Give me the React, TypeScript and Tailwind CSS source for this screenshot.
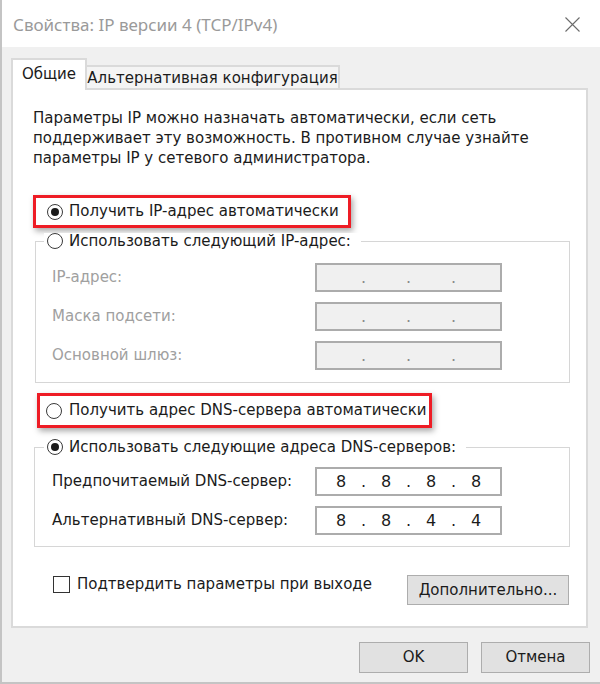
import React from "react";

const dlg = "font-['DejaVu_Sans',sans-serif]";

function Radio({ checked }: { checked?: boolean }) {
  return (
    <span className="w-[16px] h-[16px] rounded-full border-[1.5px] border-[#3a3a3a] bg-white flex items-center justify-center shrink-0">
      {checked && <span className="w-[8px] h-[8px] rounded-full bg-[#1a1a1a]" />}
    </span>
  );
}

function IpField({ octets, disabled }: { octets: string[]; disabled?: boolean }) {
  const cells: React.ReactNode[] = [];
  octets.forEach((o, i) => {
    cells.push(
      <span key={"o" + i} className="w-[30px] text-center">
        {o}
      </span>
    );
    if (i < 3)
      cells.push(
        <span key={"d" + i} className={"w-[15px] text-center " + (disabled ? "text-[#8a8a8a]" : "")}>
          .
        </span>
      );
  });
  return (
    <div
      className={
        "w-[187px] h-[29px] border-2 border-[#acacac] flex items-center pl-[9px] text-[16px] text-[#1b1b1b] " +
        (disabled ? "bg-[#f0f0f0]" : "bg-white")
      }
    >
      {cells}
    </div>
  );
}

function Row({ label, disabled, octets }: { label: string; disabled?: boolean; octets: string[] }) {
  return (
    <div className="flex items-center h-[29px]">
      <span className={"w-[263px] " + (disabled ? "text-[#a0a0a0]" : "text-[#1b1b1b]")}>{label}</span>
      <IpField octets={octets} disabled={disabled} />
    </div>
  );
}

export default function App() {
  const empty = ["", "", "", ""];
  return (
    <div className={"w-[600px] h-[684px] bg-[#f0f0f0] border-l-2 border-b-2 border-[#c4c4c4] flex flex-col overflow-hidden text-[15px] " + dlg}>
      {/* title bar */}
      <div className="h-[47px] bg-white flex items-center justify-between pl-[11px] pr-[20px] shrink-0">
        <span className="font-['Noto_Sans',sans-serif] text-[17px] text-[#9a9a9a] pt-[2px]">
          Свойства: IP версии 4 (TCP/IPv4)
        </span>
        <svg width="15" height="15" viewBox="0 0 15 15" className="mt-[2px]">
          <path d="M0.5 0.5 L14.5 14.5 M14.5 0.5 L0.5 14.5" stroke="#6b6b6b" strokeWidth="1.1" fill="none" />
        </svg>
      </div>

      {/* tabs */}
      <div className="flex items-end pl-[9px] mt-[11px] -mb-[2px] relative z-10">
        <div className="w-[76px] h-[32px] bg-white border-2 border-b-0 border-[#dadada] flex items-center justify-center text-[#1b1b1b] pb-[2px]">
          Общие
        </div>
        <div className="w-[253px] h-[23px] mb-[2px] bg-[#f4f4f4] border-2 border-l-0 border-b-0 border-[#dadada] flex items-center justify-center text-[#1b1b1b] pt-[2px]">
          Альтернативная конфигурация
        </div>
      </div>

      {/* panel */}
      <div className="ml-[9px] w-[577px] h-[540px] bg-white border-2 border-[#dadada] pl-[20px] pt-[18px] text-[#1b1b1b] shrink-0">
        <p className="leading-[20px] whitespace-nowrap">
          Параметры IP можно назначать автоматически, если сеть
          <br />
          поддерживает эту возможность. В противном случае узнайте
          <br />
          параметры IP у сетевого администратора.
        </p>

        <div className="mt-[27px] w-[318px] h-[33px] border-[3px] border-[#ee1c25] shadow-[2px_3px_6px_rgba(0,0,0,0.35)] flex items-center pl-[11px] gap-[6px]">
          <Radio checked />
          <span>Получить IP-адрес автоматически</span>
        </div>

        <div className="mt-[5px] ml-[2px] w-[535px]">
          <div className="relative z-10 ml-[9px] pl-[3px] pr-[10px] w-fit h-[16px] bg-white flex items-center gap-[6px]">
            <Radio />
            <span>Использовать следующий IP-адрес:</span>
          </div>
          <div className="-mt-[8px] h-[142px] border border-[#d6d6d6] pt-[21px] pl-[16px] flex flex-col gap-[10px]">
            <Row label="IP-адрес:" disabled octets={empty} />
            <Row label="Маска подсети:" disabled octets={empty} />
            <Row label="Основной шлюз:" disabled octets={empty} />
          </div>
        </div>

        <div className="mt-[10px] ml-[4px] w-[395px] h-[35px] border-[3px] border-[#ee1c25] shadow-[2px_3px_6px_rgba(0,0,0,0.35)] flex items-center pl-[6px] gap-[7px]">
          <Radio />
          <span>Получить адрес DNS-сервера автоматически</span>
        </div>

        <div className="mt-[11px] ml-[1px] w-[536px]">
          <div className="relative z-10 ml-[10px] pl-[3px] pr-[10px] w-fit h-[16px] bg-white flex items-center gap-[6px]">
            <Radio checked />
            <span>Использовать следующие адреса DNS-серверов:</span>
          </div>
          <div className="-mt-[8px] h-[100px] border border-[#d6d6d6] pt-[19px] pl-[17px] flex flex-col gap-[10px]">
            <Row label="Предпочитаемый DNS-сервер:" octets={["8", "8", "8", "8"]} />
            <Row label="Альтернативный DNS-сервер:" octets={["8", "8", "4", "4"]} />
          </div>
        </div>

        <div className="mt-[28px] w-[536px] flex justify-between items-start">
          <div className="ml-[20px] mt-[1px] flex items-center h-[17px]">
            <span className="w-[17px] h-[17px] border-[1.5px] border-[#333] bg-white shrink-0" />
            <span className="ml-[7px]">Подтвердить параметры при выходе</span>
          </div>
          <button className="w-[162px] h-[30px] bg-[#e1e1e1] border border-[#adadad] text-[#1b1b1b]">
            Дополнительно...
          </button>
        </div>
      </div>

      {/* dialog buttons */}
      <div className="mt-[14px] flex justify-end gap-[13px] pr-[10px]">
        <button className="w-[109px] h-[31px] bg-[#e1e1e1] border border-[#adadad] text-[#1b1b1b]">OK</button>
        <button className="w-[109px] h-[31px] bg-[#e1e1e1] border border-[#adadad] text-[#1b1b1b]">Отмена</button>
      </div>
    </div>
  );
}
